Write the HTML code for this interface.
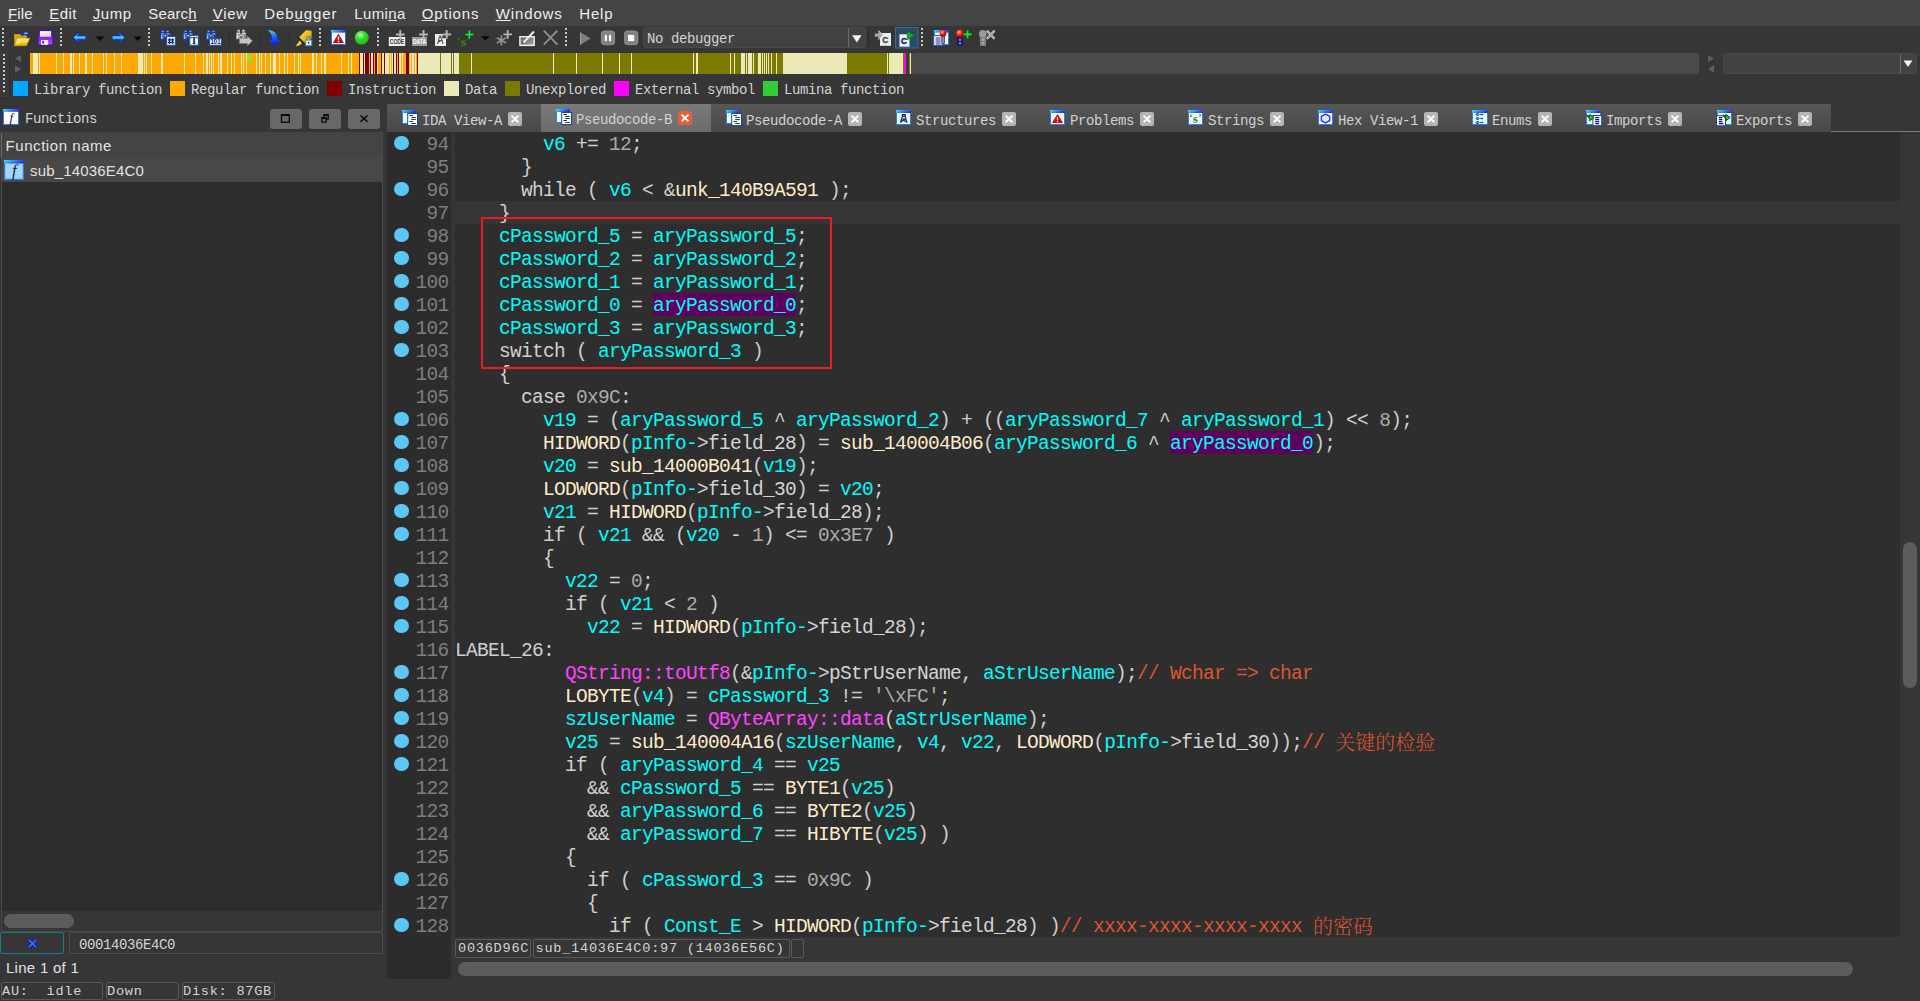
<!DOCTYPE html><html><head><meta charset="utf-8"><title>IDA</title><style>
*{box-sizing:border-box}
html,body{margin:0;padding:0}
body{width:1920px;height:1001px;background:#363636;overflow:hidden;position:relative;font-family:"Liberation Sans",sans-serif;color:#dcdcdc}
.abs{position:absolute}
.ui{font-family:"Liberation Sans",sans-serif;font-size:15px;color:#e2e2e2;white-space:pre;line-height:18px}
.ss{font-family:"Liberation Mono","Noto Sans CJK SC",monospace;font-size:14px;letter-spacing:-0.4px;color:#d2d2d2;white-space:pre;line-height:16px}
.cn{font-family:"Liberation Mono",monospace;font-size:13.6px;letter-spacing:0.74px;color:#d4d4d4;white-space:pre;line-height:18px}
#menubar{left:0;top:0;width:1920px;height:26px;background:#444444}
#menubar span.mi{position:absolute;top:3.7px;font-size:15px;line-height:19px;color:#eeeeee;white-space:pre}
#menubar u{text-decoration:underline;text-underline-offset:1.2px;text-decoration-thickness:1px}
.grip{position:absolute;width:2px;background-image:repeating-linear-gradient(to bottom,#c8c8c8 0,#c8c8c8 2px,transparent 2px,transparent 4px)}
.code{font-family:"Liberation Mono","Noto Serif CJK SC",monospace;font-size:19.5px;letter-spacing:-0.7px;line-height:23px;white-space:pre;color:#cfcfcf}
.ln{position:absolute;left:387px;width:61.4px;text-align:right;color:#7e7e7e;height:23px}
.cl{position:absolute;left:454.9px;height:23px}
.dot{position:absolute;left:394.2px;width:14.6px;height:14.6px;border-radius:50%;background:#5cc6f4}
.v{color:#00fbfb}.f{color:#ffebc8}.n{color:#ababab}.m{color:#ff44ff}.c{color:#dc5530}.w{color:#d4d4d4}
.cj{font-family:"Noto Serif CJK SC",serif;font-size:20px;letter-spacing:0;font-weight:300;line-height:0;position:relative;top:1.3px}
.hl{background:#5c005c}
.tab{position:absolute;top:104px;height:28px;background:linear-gradient(#575757,#484848)}
.tab.act{background:linear-gradient(#7a7a7a,#6c6c6c)}
.tab .tx{position:absolute;top:8.6px;left:35px}
.tab .ic{position:absolute;top:6px;left:15px;width:17px;height:16px}
.cb{position:absolute;top:8px;width:14px;height:14px;border-radius:2px;background:#b4b4b4}
.tab.act .cb{background:#e2603a;top:7px}
.tab.act .ic{top:5px}
.tab.act .tx{top:7.6px}
.sbx{position:absolute;border:1px solid #5a5a5a;border-radius:2px}
</style></head><body>
<div id="menubar" class="abs">
<span class="mi" style="left:8.0px;letter-spacing:0.13px"><u>F</u>ile</span>
<span class="mi" style="left:49.3px;letter-spacing:0.39px"><u>E</u>dit</span>
<span class="mi" style="left:92.7px;letter-spacing:0.58px"><u>J</u>ump</span>
<span class="mi" style="left:148.3px;letter-spacing:0.15px">Searc<u>h</u></span>
<span class="mi" style="left:212.7px;letter-spacing:0.69px"><u>V</u>iew</span>
<span class="mi" style="left:264.3px;letter-spacing:0.89px">Deb<u>u</u>gger</span>
<span class="mi" style="left:354.3px;letter-spacing:0.37px">Lumi<u>n</u>a</span>
<span class="mi" style="left:421.7px;letter-spacing:0.84px"><u>O</u>ptions</span>
<span class="mi" style="left:495.7px;letter-spacing:0.88px"><u>W</u>indows</span>
<span class="mi" style="left:579.3px;letter-spacing:0.79px">Help</span>
</div>
<div class="grip" style="left:2px;top:28px;height:18px"></div>
<div class="grip" style="left:60px;top:28px;height:18px"></div>
<div class="grip" style="left:148px;top:28px;height:18px"></div>
<div class="grip" style="left:319px;top:28px;height:18px"></div>
<div class="grip" style="left:377px;top:28px;height:18px"></div>
<div class="grip" style="left:565px;top:28px;height:18px"></div>
<div class="grip" style="left:921px;top:28px;height:18px"></div>
<svg class="abs" style="left:0;top:26px" width="1920" height="26" viewBox="0 0 1920 26">
<defs>
<linearGradient id="gy" x1="0" y1="0" x2="0.3" y2="1"><stop offset="0" stop-color="#fff6a0"/><stop offset="0.6" stop-color="#ffe040"/><stop offset="1" stop-color="#e0a010"/></linearGradient>
<linearGradient id="gb" x1="0" y1="0" x2="0" y2="1"><stop offset="0" stop-color="#0020f0"/><stop offset="0.45" stop-color="#50d8ff"/><stop offset="1" stop-color="#0020e0"/></linearGradient>
<linearGradient id="gb2" x1="0" y1="0" x2="0" y2="1"><stop offset="0" stop-color="#48e0ff"/><stop offset="0.4" stop-color="#2868ff"/><stop offset="1" stop-color="#0010f0"/></linearGradient>
<radialGradient id="gg" cx="0.4" cy="0.32" r="0.75"><stop offset="0" stop-color="#b8ffa0"/><stop offset="0.45" stop-color="#30d828"/><stop offset="0.85" stop-color="#20c018"/><stop offset="1" stop-color="#0a6808"/></radialGradient>
<radialGradient id="gr" cx="0.38" cy="0.32" r="0.75"><stop offset="0" stop-color="#ffb0a0"/><stop offset="0.5" stop-color="#f01808"/><stop offset="1" stop-color="#980000"/></radialGradient>
<linearGradient id="gw" x1="0" y1="0" x2="1" y2="1"><stop offset="0" stop-color="#ffffff"/><stop offset="1" stop-color="#ecc8c8"/></linearGradient>
<linearGradient id="gp" x1="0" y1="0" x2="0" y2="1"><stop offset="0" stop-color="#5810c8"/><stop offset="0.5" stop-color="#8028f0"/><stop offset="1" stop-color="#a848ff"/></linearGradient>
<linearGradient id="ggr" x1="0" y1="0" x2="1" y2="1"><stop offset="0" stop-color="#606060"/><stop offset="1" stop-color="#a8a8a8"/></linearGradient>
<linearGradient id="gtb" x1="0" y1="0" x2="1" y2="0.4"><stop offset="0" stop-color="#50e0ff"/><stop offset="0.6" stop-color="#2a7cf0"/><stop offset="1" stop-color="#3030e0"/></linearGradient>
<linearGradient id="ghl" x1="0" y1="0" x2="1" y2="1"><stop offset="0" stop-color="#ffe860"/><stop offset="0.6" stop-color="#e8b800"/><stop offset="1" stop-color="#806800"/></linearGradient>
</defs>
<g transform="translate(14,4)"><path d="M0.3 4.2 h5.6 l1.2 1.4 h5.6 v2.6 h-12.4z" fill="#e8b828"/><path d="M0.3 5.5 h12.4 v10.3 h-12.4z" fill="#d8a010"/><path d="M3.2 8.2 h12.6 l-3.2 7.6 h-12.2z" fill="url(#gy)" stroke="#c89010" stroke-width="0.5"/><path d="M7.4 6 q0.4 -3.6 4.4 -3.8 v-2 l3.2 3.2 l-3.2 3.2 v-2 q-2.4 -0.2 -3 1.6z" fill="#1838e8"/><path d="M10.2 3.2 h3.4" stroke="#70f0ff" stroke-width="1.1"/></g>
<g transform="translate(38,4)"><rect x="0.2" y="0.2" width="14.6" height="14.6" rx="0.6" fill="url(#gp)"/><rect x="0.2" y="0.2" width="14.6" height="14.6" rx="0.6" fill="none" stroke="#4808a8" stroke-width="0.7"/><rect x="2" y="1.1" width="11" height="5.7" fill="url(#gw)"/><rect x="3" y="10" width="7.2" height="4.8" fill="#f4ecff"/><rect x="4.3" y="10.8" width="1.6" height="2.8" fill="#5810b0"/></g>
<g transform="translate(73,4)"><path d="M0.3 7.5 L5.8 2.2 L6.8 3.2 L4 6 H12.8 V9.4 H4 L6.8 11.8 L5.8 12.8Z" fill="url(#gb)" stroke="#0020f0" stroke-width="0.5"/></g>
<path d="M95.4 10.4 h9 l-4.5 4.6z" fill="#0a0a0a"/>
<g transform="translate(112,4)"><path d="M12.7 7.5 L7.2 2.2 L6.2 3.2 L9 6 H0.2 V9.4 H9 L6.2 11.8 L7.2 12.8Z" fill="url(#gb)" stroke="#0020f0" stroke-width="0.5"/></g>
<path d="M133.2 10.4 h9 l-4.5 4.6z" fill="#0a0a0a"/>
<g transform="translate(160.2,4)"><rect x="1.2" y="0" width="2.8" height="3.4" fill="#1a3cb0"/><rect x="6" y="0" width="2.8" height="3.4" fill="#1a3cb0"/><rect x="0" y="3" width="4.7" height="6.8" rx="0.6" fill="#1a3cb0"/><rect x="5.5" y="3" width="4.7" height="6.8" rx="0.6" fill="#1a3cb0"/><rect x="1.6" y="0.8" width="2" height="1" fill="#8cc8ff"/><rect x="6.4" y="0.8" width="2" height="1" fill="#8cc8ff"/><rect x="0.8" y="3.4" width="3.2" height="1.1" fill="#8cc8ff"/><rect x="6.2" y="3.4" width="3.2" height="1.1" fill="#8cc8ff"/><rect x="0.8" y="5.2" width="1.6" height="3.8" fill="#8cc8ff"/><rect x="6.4" y="5.2" width="1.4" height="3.4" fill="#3a70e0"/><rect x="2.4" y="5.4" width="1.4" height="3.4" fill="#3a70e0"/><rect x="4.4" y="5" width="1.4" height="1.4" fill="#ffffff"/><rect x="6.3" y="6.5" width="9" height="8.8" fill="#ffffff" stroke="#1c58a8" stroke-width="1.2"/><path d="M9.3 8.2 V14 M12.3 8.2 V14 M7.6 9.8 H14 M7.6 12.4 H14" stroke="#0a2060" stroke-width="1.3"/></g>
<g transform="translate(183,4)"><rect x="1.2" y="0" width="2.8" height="3.4" fill="#1a3cb0"/><rect x="6" y="0" width="2.8" height="3.4" fill="#1a3cb0"/><rect x="0" y="3" width="4.7" height="6.8" rx="0.6" fill="#1a3cb0"/><rect x="5.5" y="3" width="4.7" height="6.8" rx="0.6" fill="#1a3cb0"/><rect x="1.6" y="0.8" width="2" height="1" fill="#8cc8ff"/><rect x="6.4" y="0.8" width="2" height="1" fill="#8cc8ff"/><rect x="0.8" y="3.4" width="3.2" height="1.1" fill="#8cc8ff"/><rect x="6.2" y="3.4" width="3.2" height="1.1" fill="#8cc8ff"/><rect x="0.8" y="5.2" width="1.6" height="3.8" fill="#8cc8ff"/><rect x="6.4" y="5.2" width="1.4" height="3.4" fill="#3a70e0"/><rect x="2.4" y="5.4" width="1.4" height="3.4" fill="#3a70e0"/><rect x="4.4" y="5" width="1.4" height="1.4" fill="#ffffff"/><rect x="6.7" y="5.5" width="8.8" height="9.8" fill="#ffffff" stroke="#1c58a8" stroke-width="1.2"/><text x="11.1" y="14.4" font-family="Liberation Serif,serif" font-weight="bold" font-size="10.5" text-anchor="middle" fill="#0a1a58">T</text></g>
<g transform="translate(206,4)"><rect x="1.2" y="0" width="2.8" height="3.4" fill="#1a3cb0"/><rect x="6" y="0" width="2.8" height="3.4" fill="#1a3cb0"/><rect x="0" y="3" width="4.7" height="6.8" rx="0.6" fill="#1a3cb0"/><rect x="5.5" y="3" width="4.7" height="6.8" rx="0.6" fill="#1a3cb0"/><rect x="1.6" y="0.8" width="2" height="1" fill="#8cc8ff"/><rect x="6.4" y="0.8" width="2" height="1" fill="#8cc8ff"/><rect x="0.8" y="3.4" width="3.2" height="1.1" fill="#8cc8ff"/><rect x="6.2" y="3.4" width="3.2" height="1.1" fill="#8cc8ff"/><rect x="0.8" y="5.2" width="1.6" height="3.8" fill="#8cc8ff"/><rect x="6.4" y="5.2" width="1.4" height="3.4" fill="#3a70e0"/><rect x="2.4" y="5.4" width="1.4" height="3.4" fill="#3a70e0"/><rect x="4.4" y="5" width="1.4" height="1.4" fill="#ffffff"/><rect x="3.5" y="8.5" width="12" height="6.8" fill="#ffffff" stroke="#1c58a8" stroke-width="1.2"/><text x="9.5" y="14.4" font-family="Liberation Sans,sans-serif" font-weight="bold" font-size="6.4" text-anchor="middle" fill="#0a1a58" textLength="10" lengthAdjust="spacingAndGlyphs">101</text></g>
<rect x="229" y="4" width="1" height="16" fill="#2c2c2c"/>
<g transform="translate(236,3.5)"><rect x="1.2" y="0" width="2.8" height="3.4" fill="#8c8c8c"/><rect x="6" y="0" width="2.8" height="3.4" fill="#8c8c8c"/><rect x="0" y="3" width="4.7" height="6.8" rx="0.6" fill="#8c8c8c"/><rect x="5.5" y="3" width="4.7" height="6.8" rx="0.6" fill="#8c8c8c"/><rect x="1.6" y="0.8" width="2" height="1" fill="#e0e0e0"/><rect x="6.4" y="0.8" width="2" height="1" fill="#e0e0e0"/><rect x="0.8" y="3.4" width="3.2" height="1.1" fill="#e0e0e0"/><rect x="6.2" y="3.4" width="3.2" height="1.1" fill="#e0e0e0"/><rect x="0.8" y="5.2" width="1.6" height="3.8" fill="#e0e0e0"/><rect x="6.4" y="5.2" width="1.4" height="3.4" fill="#b8b8b8"/><rect x="2.4" y="5.4" width="1.4" height="3.4" fill="#b8b8b8"/><rect x="4.4" y="5" width="1.4" height="1.4" fill="#ffffff"/><path d="M3.4 8.8 h8 v-2.2 l5 4.8 l-5 4.8 v-2.2 h-8z" fill="#c4c4c4" stroke="#7c7c7c" stroke-width="0.7"/></g>
<rect x="259" y="4" width="1" height="16" fill="#2c2c2c"/>
<g transform="translate(267,4)"><path d="M0.8 0 Q10.5 0.2 10.2 9.8 H13.2 L7.4 16 L1.6 9.8 H4.8 Q5.4 3.4 0.8 0Z" fill="url(#gb2)"/></g>
<rect x="289" y="4" width="1" height="16" fill="#2c2c2c"/>
<g transform="translate(296,4)"><path d="M3 7.2 L10 0.2 L15.6 0.8 L15.6 9 L8.6 13Z" fill="url(#ghl)"/><path d="M3 7.2 L8.6 13 L7.2 14 L2.4 8.4Z" fill="#0c2818"/><path d="M3.6 10.6 L6 13.2 L3.4 15.6 Q1 16.4 0 15.4Z" fill="#ffc800"/><path d="M0 15.4 Q2 16.4 4 15 L3 15.9Z" fill="#e06000"/><rect x="9.4" y="10" width="6.4" height="5.8" rx="0.6" fill="#dce6f0" stroke="#3c78b8" stroke-width="0.9"/><path d="M10.8 10 v-1.6 a1.8 1.8 0 0 1 3.6 0 v1.6" fill="none" stroke="#5088c0" stroke-width="1.1"/><rect x="12.1" y="12" width="1" height="1.8" fill="#103060"/><rect x="12" y="8.2" width="1.2" height="1.6" fill="#f0a020"/></g>
<g transform="translate(331,4)"><rect x="0.5" y="0.5" width="14" height="14" fill="#f0fcff" stroke="#2a6cf0" stroke-width="1"/><rect x="0" y="0" width="15" height="2.6" fill="url(#gtb)"/><path d="M7.4 3.6 L13 13 H1.8Z" fill="#d80808"/><rect x="6.8" y="6.4" width="1.3" height="3.6" fill="#fff"/><rect x="6.8" y="10.8" width="1.3" height="1.3" fill="#fff"/></g>
<circle cx="361.75" cy="11.7" r="7" fill="url(#gg)"/>
<g transform="translate(388.8,4)"><rect x="0" y="7" width="16.4" height="9" fill="#f0f0f0"/><text x="8.2" y="14.4" font-family="Liberation Sans,sans-serif" font-weight="bold" font-size="7" text-anchor="middle" fill="#303030" textLength="14.4" lengthAdjust="spacingAndGlyphs">CODE</text><path d="M7.1 4.4 H15.9 M11.5 0.0 V8.8" stroke="#b2b2b2" stroke-width="2" fill="none"/></g>
<g transform="translate(412,4)"><rect x="0" y="7" width="15" height="9" fill="#9c9c9c"/><text x="7.5" y="14.4" font-family="Liberation Sans,sans-serif" font-weight="bold" font-size="7" text-anchor="middle" fill="#ffffff" textLength="13" lengthAdjust="spacingAndGlyphs">DATA</text><path d="M7.1 4.4 H15.9 M11.5 0.0 V8.8" stroke="#b2b2b2" stroke-width="2" fill="none"/></g>
<g transform="translate(435,4)"><path d="M0 4 H7.4 V8.2 H11 V16 H0Z" fill="#ececec"/><path d="M4 6 h2.4 M5.2 6 v1 M4.2 7.4 h2 L8 14 M4.2 7.4 L2.6 14 M3.4 10.4 h3.8 M3 12.4 l4 -2.4" stroke="#484848" stroke-width="1" fill="none"/><path d="M7.299999999999999 4.4 H16.1 M11.7 0.0 V8.8" stroke="#b2b2b2" stroke-width="2" fill="none"/></g>
<g transform="translate(457.5,4)"><text x="6" y="15.6" font-family="Liberation Serif,serif" font-weight="bold" font-size="13.5" text-anchor="middle" fill="#3a8c08">s</text><text x="1.2" y="13" font-family="Liberation Serif,serif" font-weight="bold" font-size="9" text-anchor="middle" fill="#3a8c08">‘</text><text x="10.6" y="13" font-family="Liberation Serif,serif" font-weight="bold" font-size="9" text-anchor="middle" fill="#3a8c08">’</text><path d="M7.5 4.4 H16.3 M11.9 0.0 V8.8" stroke="#0a5a10" stroke-width="3" fill="none"/><path d="M7.9 4.4 H15.9 M11.9 0.40000000000000036 V8.4" stroke="#28e848" stroke-width="1.5" fill="none"/></g>
<path d="M480.9 10.2 h9 l-4.5 4.6z" fill="#0a0a0a"/>
<g transform="translate(496,4)"><path d="M5.4 5.2 V15.6 M0.8 7.8 L10 13 M10 7.8 L0.8 13" stroke="#909090" stroke-width="1.7" fill="none"/><path d="M7.3999999999999995 4.4 H16.0 M11.7 0.10000000000000053 V8.7" stroke="#b2b2b2" stroke-width="1.9" fill="none"/></g>
<g transform="translate(519.2,4)"><rect x="0.7" y="6.7" width="14.3" height="8.7" fill="url(#ggr)" stroke="#f0f0f0" stroke-width="1.4"/><path d="M3.4 12.2 L14 0.8 L15.4 2.2 L4.8 13.2Z" fill="#f4f4f4"/><rect x="2.6" y="12.2" width="1.4" height="1.2" fill="#303030"/></g>
<g transform="translate(543,4)"><path d="M0.8 0.6 L14.4 14.6 M14.4 0.6 L0.8 14.6" stroke="#8e8e8e" stroke-width="1.9" fill="none"/></g>
<path d="M580 6.1 V19 L590.8 12.6Z" fill="#7e7e7e"/><path d="M580.5 6.6 V18.4" stroke="#a0a0a0" stroke-width="1"/>
<rect x="601.4" y="5" width="13.2" height="13.7" rx="2.6" fill="#828282" stroke="#999" stroke-width="0.8"/><rect x="604.8" y="8.9" width="2.1" height="6.2" fill="#fbfbfb"/><rect x="609" y="8.9" width="2.1" height="6.2" fill="#fbfbfb"/>
<rect x="624.6" y="5" width="13.2" height="13.7" rx="2.6" fill="#828282" stroke="#999" stroke-width="0.8"/><rect x="628" y="8.9" width="6.2" height="6.2" fill="#fbfbfb"/>
<rect x="643.5" y="1.5" width="222" height="20" rx="2.5" fill="#424242" stroke="#494949" stroke-width="1"/>
<rect x="848" y="2" width="1" height="19" fill="#6c6c6c"/>
<path d="M852 9.3 h9.6 l-4.8 7.2z" fill="#f6f6f6"/>
<rect x="868" y="4" width="1" height="16" fill="#2c2c2c"/>
<g transform="translate(874.8,4)"><rect x="5.2" y="3" width="11" height="12.8" fill="#ebebeb"/><text x="10.4" y="12.6" font-family="Liberation Sans,sans-serif" font-weight="bold" font-size="8.4" text-anchor="middle" fill="#484848" stroke="#484848" stroke-width="0.4">C</text><path d="M0 3.4 h3.6 v-3.2 l4.6 4.9 l-4.6 4.9 v-3.2 h-3.6z" fill="#a4a4a4"/><path d="M3.8 0.6 l4.4 4.5 l-4.4 4.5" fill="none" stroke="#d8d8d8" stroke-width="0.8"/></g>
<rect x="895.5" y="1.5" width="22.5" height="20.5" fill="#2c4a64" stroke="#3c6a98" stroke-width="1"/>
<g transform="translate(899.4,4)"><rect x="0.4" y="4.4" width="9.4" height="12" fill="#f0f8ff" stroke="#a8c8f0" stroke-width="0.8"/><text x="4.6" y="13.9" font-family="Liberation Sans,sans-serif" font-weight="bold" font-size="8.4" text-anchor="middle" fill="#10107a" stroke="#10107a" stroke-width="0.4">C</text><path d="M7.8 1.2 V9.8 L15.2 5.5Z" fill="#18a828" stroke="#0a6a18" stroke-width="0.5"/></g>
<g transform="translate(933.2,4)"><rect x="1.2" y="0.5" width="14.2" height="14" fill="#f4fbff" stroke="#2a7cf0" stroke-width="1"/><rect x="0.7" y="0" width="15.2" height="2.6" fill="url(#gtb)"/><rect x="0.5" y="5.6" width="8.6" height="10" fill="#ffffff" stroke="#1c58a8" stroke-width="1"/><path d="M2.4 8 h5 M2.4 10 h5 M2.4 12 h5 M2.4 14 h5" stroke="#1020a0" stroke-width="1.1"/><rect x="8.6" y="6" width="2.8" height="7.4" fill="#909088" stroke="#202878" stroke-width="0.7"/><circle cx="9.8" cy="3.4" r="3.3" fill="url(#gr)"/></g>
<g transform="translate(956,4)"><rect x="1" y="6.5" width="6" height="9.5" fill="#101878"/><circle cx="4" cy="9.8" r="1.2" fill="#8c8c8c"/><circle cx="4" cy="13.2" r="1.2" fill="#8c8c8c"/><circle cx="3.9" cy="3.7" r="3.9" fill="url(#gr)"/><path d="M7.3999999999999995 4.4 H15.8 M11.6 0.20000000000000018 V8.600000000000001" stroke="#0a5a10" stroke-width="3" fill="none"/><path d="M7.699999999999999 4.4 H15.5 M11.6 0.5000000000000004 V8.3" stroke="#28e040" stroke-width="1.6" fill="none"/></g>
<g transform="translate(979,4)"><rect x="1" y="6.5" width="6" height="9.5" fill="#808080"/><circle cx="4" cy="9.8" r="1.2" fill="#a8a8a8"/><circle cx="4" cy="13.2" r="1.2" fill="#a8a8a8"/><circle cx="3.8" cy="3.7" r="3.8" fill="#9a9a9a"/><path d="M7.8 0.6 L15.6 8.8 M15.6 0.6 L7.8 8.8" stroke="#c4c4c4" stroke-width="2.4"/><path d="M7.8 0.6 L15.6 8.8 M15.6 0.6 L7.8 8.8" stroke="#8a8a8a" stroke-width="0.7"/></g>
</svg>
<div class="abs ss" style="left:647px;top:30.7px">No debugger</div>
<div class="abs" style="left:0;top:50px;width:10px;height:49px;background:#3a3a3a;border-right:1px solid #2c2c2c;border-bottom:1px solid #2c2c2c"></div>
<div class="grip" style="left:3px;top:54px;height:38px"></div>
<svg class="abs" style="left:12px;top:53px" width="12" height="22" viewBox="0 0 12 22"><path d="M9 2 L9 9 L3 5.5Z M3 12 L3 20 L9 16Z" fill="#5e5e5e"/></svg>
<svg class="abs" style="left:0;top:53px" width="1920" height="21" viewBox="0 0 1920 21" shape-rendering="crispEdges">
<rect x="911" y="0" width="788" height="21" fill="#4a4a4a"/>
<rect x="30" y="0" width="329" height="21" fill="#ffa800"/>
<rect x="33" y="0" width="5" height="21" fill="#ece9b8"/>
<rect x="39" y="0" width="1" height="21" fill="#ece9b8"/>
<rect x="56" y="0" width="1" height="21" fill="#ece9b8"/>
<rect x="63" y="0" width="1" height="21" fill="#ece9b8"/>
<rect x="70" y="0" width="2" height="21" fill="#ece9b8"/>
<rect x="73" y="0" width="1" height="21" fill="#ece9b8"/>
<rect x="79" y="0" width="1" height="21" fill="#ece9b8"/>
<rect x="85" y="0" width="2" height="21" fill="#ece9b8"/>
<rect x="92" y="0" width="1" height="21" fill="#ece9b8"/>
<rect x="103" y="0" width="1" height="21" fill="#ece9b8"/>
<rect x="106" y="0" width="1" height="21" fill="#ece9b8"/>
<rect x="114" y="0" width="1" height="21" fill="#ece9b8"/>
<rect x="121" y="0" width="1" height="21" fill="#ece9b8"/>
<rect x="138" y="0" width="5" height="21" fill="#ece9b8"/>
<rect x="144" y="0" width="1" height="21" fill="#ece9b8"/>
<rect x="146" y="0" width="1" height="21" fill="#ece9b8"/>
<rect x="151" y="0" width="1" height="21" fill="#ece9b8"/>
<rect x="161" y="0" width="2" height="21" fill="#ece9b8"/>
<rect x="184" y="0" width="1" height="21" fill="#ece9b8"/>
<rect x="195" y="0" width="1" height="21" fill="#ece9b8"/>
<rect x="203" y="0" width="1" height="21" fill="#ece9b8"/>
<rect x="206" y="0" width="2" height="21" fill="#ece9b8"/>
<rect x="209" y="0" width="1" height="21" fill="#ece9b8"/>
<rect x="211" y="0" width="1" height="21" fill="#ece9b8"/>
<rect x="213" y="0" width="1" height="21" fill="#ece9b8"/>
<rect x="218" y="0" width="1" height="21" fill="#ece9b8"/>
<rect x="220" y="0" width="2" height="21" fill="#ece9b8"/>
<rect x="227" y="0" width="1" height="21" fill="#ece9b8"/>
<rect x="231" y="0" width="1" height="21" fill="#ece9b8"/>
<rect x="234" y="0" width="1" height="21" fill="#ece9b8"/>
<rect x="241" y="0" width="1" height="21" fill="#ece9b8"/>
<rect x="243" y="0" width="1" height="21" fill="#ece9b8"/>
<rect x="246" y="0" width="1" height="21" fill="#ece9b8"/>
<rect x="256" y="0" width="1" height="21" fill="#ece9b8"/>
<rect x="259" y="0" width="1" height="21" fill="#ece9b8"/>
<rect x="261" y="0" width="1" height="21" fill="#ece9b8"/>
<rect x="265" y="0" width="1" height="21" fill="#ece9b8"/>
<rect x="270" y="0" width="1" height="21" fill="#ece9b8"/>
<rect x="273" y="0" width="3" height="21" fill="#ece9b8"/>
<rect x="279" y="0" width="1" height="21" fill="#ece9b8"/>
<rect x="284" y="0" width="1" height="21" fill="#ece9b8"/>
<rect x="287" y="0" width="1" height="21" fill="#ece9b8"/>
<rect x="294" y="0" width="1" height="21" fill="#ece9b8"/>
<rect x="298" y="0" width="1" height="21" fill="#ece9b8"/>
<rect x="300" y="0" width="1" height="21" fill="#ece9b8"/>
<rect x="312" y="0" width="2" height="21" fill="#ece9b8"/>
<rect x="316" y="0" width="1" height="21" fill="#ece9b8"/>
<rect x="321" y="0" width="1" height="21" fill="#ece9b8"/>
<rect x="324" y="0" width="2" height="21" fill="#ece9b8"/>
<rect x="341" y="0" width="1" height="21" fill="#ece9b8"/>
<rect x="348" y="0" width="1" height="21" fill="#ece9b8"/>
<rect x="351" y="0" width="1" height="21" fill="#ece9b8"/>
<rect x="359" y="0" width="59" height="21" fill="#ffa800"/>
<rect x="359" y="0" width="1" height="21" fill="#800000"/>
<rect x="360" y="0" width="3" height="21" fill="#ece9b8"/>
<rect x="363" y="0" width="1" height="21" fill="#800000"/>
<rect x="364" y="0" width="1" height="21" fill="#ece9b8"/>
<rect x="365" y="0" width="4" height="21" fill="#800000"/>
<rect x="370" y="0" width="1" height="21" fill="#800000"/>
<rect x="371" y="0" width="2" height="21" fill="#ece9b8"/>
<rect x="373" y="0" width="1" height="21" fill="#800000"/>
<rect x="375" y="0" width="2" height="21" fill="#800000"/>
<rect x="377" y="0" width="1" height="21" fill="#ece9b8"/>
<rect x="381" y="0" width="1" height="21" fill="#800000"/>
<rect x="382" y="0" width="2" height="21" fill="#ece9b8"/>
<rect x="384" y="0" width="1" height="21" fill="#800000"/>
<rect x="385" y="0" width="4" height="21" fill="#ece9b8"/>
<rect x="390" y="0" width="1" height="21" fill="#ece9b8"/>
<rect x="392" y="0" width="1" height="21" fill="#ece9b8"/>
<rect x="393" y="0" width="1" height="21" fill="#800000"/>
<rect x="394" y="0" width="2" height="21" fill="#ece9b8"/>
<rect x="396" y="0" width="1" height="21" fill="#800000"/>
<rect x="398" y="0" width="1" height="21" fill="#800000"/>
<rect x="399" y="0" width="2" height="21" fill="#ece9b8"/>
<rect x="402" y="0" width="1" height="21" fill="#ece9b8"/>
<rect x="406" y="0" width="3" height="21" fill="#800000"/>
<rect x="410" y="0" width="1" height="21" fill="#ece9b8"/>
<rect x="412" y="0" width="2" height="21" fill="#ece9b8"/>
<rect x="415" y="0" width="1" height="21" fill="#ece9b8"/>
<rect x="417" y="0" width="1" height="21" fill="#800000"/>
<rect x="418" y="0" width="41" height="21" fill="#ece9b8"/>
<rect x="440" y="0" width="1" height="21" fill="#7a7a00"/>
<rect x="451" y="0" width="1" height="21" fill="#7a7a00"/>
<rect x="453" y="0" width="1" height="21" fill="#7a7a00"/>
<rect x="459" y="0" width="452" height="21" fill="#7a7a00"/>
<rect x="471" y="0" width="1" height="21" fill="#ece9b8"/>
<rect x="553" y="0" width="1" height="21" fill="#ece9b8"/>
<rect x="576" y="0" width="1" height="21" fill="#ece9b8"/>
<rect x="602" y="0" width="1" height="21" fill="#ece9b8"/>
<rect x="619" y="0" width="1" height="21" fill="#ece9b8"/>
<rect x="631" y="0" width="1" height="21" fill="#ece9b8"/>
<rect x="693" y="0" width="1" height="21" fill="#ece9b8"/>
<rect x="696" y="0" width="2" height="21" fill="#ece9b8"/>
<rect x="730" y="0" width="1" height="21" fill="#ece9b8"/>
<rect x="734" y="0" width="1" height="21" fill="#ece9b8"/>
<rect x="741" y="0" width="4" height="21" fill="#ece9b8"/>
<rect x="746" y="0" width="1" height="21" fill="#ece9b8"/>
<rect x="748" y="0" width="4" height="21" fill="#ece9b8"/>
<rect x="753" y="0" width="1" height="21" fill="#ece9b8"/>
<rect x="758" y="0" width="3" height="21" fill="#ece9b8"/>
<rect x="762" y="0" width="1" height="21" fill="#ece9b8"/>
<rect x="764" y="0" width="1" height="21" fill="#ece9b8"/>
<rect x="766" y="0" width="1" height="21" fill="#ece9b8"/>
<rect x="768" y="0" width="1" height="21" fill="#ece9b8"/>
<rect x="771" y="0" width="1" height="21" fill="#ece9b8"/>
<rect x="776" y="0" width="1" height="21" fill="#ece9b8"/>
<rect x="783" y="0" width="64" height="21" fill="#ece9b8"/>
<rect x="887" y="0" width="1" height="21" fill="#ece9b8"/>
<rect x="889" y="0" width="14" height="21" fill="#ece9b8"/>
<rect x="910" y="0" width="1" height="21" fill="#ece9b8"/>
<rect x="904" y="0" width="2" height="21" fill="#ff00ff"/>
<rect x="906" y="0" width="3" height="21" fill="#3c3c3c"/>
<path d="M248.4 1 h2.4 v4.6 h1.6 l-2.8 3.6 l-2.8 -3.6 h1.6z" fill="#5cff30" shape-rendering="auto"/>
</svg>
<svg class="abs" style="left:1705px;top:53px" width="12" height="22" viewBox="0 0 12 22"><path d="M3 2 L3 9 L9 5.5Z M9 12 L9 20 L3 16Z" fill="#5e5e5e"/></svg>
<div class="abs" style="left:1723px;top:53px;width:194px;height:21px;background:#424242;border:1px solid #494949;border-radius:2.5px"></div>
<div class="abs" style="left:1900px;top:54px;width:1px;height:19px;background:#6c6c6c"></div>
<svg class="abs" style="left:1903px;top:60px" width="10" height="8"><path d="M0.5 0.5 h9 l-4.5 6.5z" fill="#f0f0f0"/></svg>
<div class="abs" style="left:13px;top:81px;width:15px;height:15px;background:#00a8ff"></div>
<div class="abs ss" style="left:34px;top:81.7px">Library function</div>
<div class="abs" style="left:170px;top:81px;width:15px;height:15px;background:#ffa800"></div>
<div class="abs ss" style="left:191px;top:81.7px">Regular function</div>
<div class="abs" style="left:327px;top:81px;width:15px;height:15px;background:#800000"></div>
<div class="abs ss" style="left:348px;top:81.7px">Instruction</div>
<div class="abs" style="left:444px;top:81px;width:15px;height:15px;background:#ece9b8"></div>
<div class="abs ss" style="left:465px;top:81.7px">Data</div>
<div class="abs" style="left:505px;top:81px;width:15px;height:15px;background:#7a7a00"></div>
<div class="abs ss" style="left:526px;top:81.7px">Unexplored</div>
<div class="abs" style="left:614px;top:81px;width:15px;height:15px;background:#ff00ff"></div>
<div class="abs ss" style="left:635px;top:81.7px">External symbol</div>
<div class="abs" style="left:763px;top:81px;width:15px;height:15px;background:#32cd32"></div>
<div class="abs ss" style="left:784px;top:81.7px">Lumina function</div>
<div class="abs" style="left:3px;top:109px;width:16px;height:16px"><svg width="16" height="16" viewBox="0 0 16 16"><rect x="0.5" y="0.5" width="15" height="15" fill="#ffffff" stroke="#2a7cf0" stroke-width="1"/><rect x="0" y="0" width="16" height="2.8" fill="url(#gtb)"/><text x="8.2" y="13" font-family="Liberation Serif,serif" font-style="italic" font-size="13" text-anchor="middle" fill="#0a1a50">f</text></svg></div>
<div class="abs ss" style="left:25px;top:111.4px">Functions</div>
<div class="abs" style="left:270px;top:109px;width:32px;height:20px;border-radius:3px;background:#686868"></div>
<div class="abs" style="left:309px;top:109px;width:32px;height:20px;border-radius:3px;background:#686868"></div>
<div class="abs" style="left:348px;top:109px;width:32px;height:20px;border-radius:3px;background:#686868"></div>
<svg class="abs" style="left:270px;top:109px" width="112" height="20" viewBox="0 0 112 20"><rect x="11.5" y="6.2" width="7.8" height="7" fill="none" stroke="#080808" stroke-width="1.3"/><rect x="10.85" y="5.2" width="9.1" height="1.8" fill="#080808"/><rect x="53.9" y="6" width="4.3" height="4.2" fill="none" stroke="#080808" stroke-width="1.2"/><rect x="53.3" y="5.3" width="5.5" height="1.5" fill="#080808"/><rect x="51.85" y="9" width="4.3" height="4.1" fill="#686868" stroke="#080808" stroke-width="1.2"/><rect x="51.25" y="8.3" width="5.5" height="1.5" fill="#080808"/><path d="M90.4 6.5 L97.5 12.8 M97.5 6.5 L90.4 12.8" stroke="#080808" stroke-width="1.5"/></svg>
<div class="abs" style="left:1px;top:132px;width:381px;height:779px;background:#2d2d2d"></div>
<div class="abs" style="left:0px;top:132px;width:382px;height:26px;background:#444444"></div>
<div class="abs" style="left:382px;top:132px;width:1.2px;height:800px;background:#4a4a4a"></div>
<div class="abs" style="left:1px;top:133px;width:1px;height:24px;background:#6a6a6a"></div>
<div class="abs" style="left:1px;top:158px;width:381px;height:24px;background:#484848"></div>
<div class="abs ui" style="left:5.6px;top:137px;letter-spacing:0.55px">Function name</div>
<div class="abs" style="left:4px;top:160px;width:20px;height:20px"><svg width="20" height="20" viewBox="0 0 16 16"><rect x="0.5" y="0.5" width="15" height="15" fill="#a8d4f4" stroke="#2a7cf0" stroke-width="1"/><rect x="0" y="0" width="16" height="2.8" fill="url(#gtb)"/><text x="8.2" y="13" font-family="Liberation Serif,serif" font-style="italic" font-size="13" text-anchor="middle" fill="#0a1a50">f</text></svg></div>
<div class="abs ui" style="left:30px;top:161.5px;letter-spacing:0.18px">sub_14036E4C0</div>
<div class="abs" style="left:1px;top:911px;width:381px;height:21px;background:#363636"></div>
<div class="abs" style="left:4px;top:914.3px;width:70px;height:13.4px;border-radius:6.7px;background:#5c5c5c"></div>
<div class="abs" style="left:0px;top:931px;width:383px;height:1px;background:#474747"></div>
<div class="abs" style="left:0.5px;top:182px;width:1px;height:750px;background:#474747"></div>
<div class="tab" style="left:387px;width:154px"><div class="ic"><svg width="17" height="16" viewBox="0 0 17 16" style="overflow:visible"><rect x="0.5" y="0.5" width="13" height="13" fill="#ecfcff" stroke="#2a7cf0" stroke-width="1"/><rect x="0" y="0" width="14" height="3" fill="url(#gtb)"/><rect x="5.7" y="3.5" width="9.8" height="12" fill="#ffffff" stroke="#154a90" stroke-width="1"/><path d="M7.4 5.5 h3.6 M9.2 7.5 h4.6 M9.2 9.5 h4.6 M7.4 11.5 h3.6 M9.2 13.5 h4.6" stroke="#283848" stroke-width="1"/></svg></div><div class="tx ss">IDA View-A</div><div class="cb" style="left:121px"><svg width="14" height="14" viewBox="0 0 14 14"><path d="M4.3 4.3 L9.7 9.7 M9.7 4.3 L4.3 9.7" stroke="#fff" stroke-width="1.9" stroke-linecap="square"/></svg></div></div>
<div class="tab act" style="left:541px;width:170px"><div class="ic"><svg width="17" height="16" viewBox="0 0 17 16" style="overflow:visible"><rect x="0.5" y="0.5" width="13" height="13" fill="#ecfcff" stroke="#2a7cf0" stroke-width="1"/><rect x="0" y="0" width="14" height="3" fill="url(#gtb)"/><rect x="5.7" y="3.5" width="9.8" height="12" fill="#ffffff" stroke="#154a90" stroke-width="1"/><path d="M7.4 5.5 h3.6 M9.2 7.5 h4.6 M9.2 9.5 h4.6 M7.4 11.5 h3.6 M9.2 13.5 h4.6" stroke="#283848" stroke-width="1"/></svg></div><div class="tx ss">Pseudocode-B</div><div class="cb" style="left:137px"><svg width="14" height="14" viewBox="0 0 14 14"><path d="M4.3 4.3 L9.7 9.7 M9.7 4.3 L4.3 9.7" stroke="#fff" stroke-width="1.9" stroke-linecap="square"/></svg></div></div>
<div class="tab" style="left:711px;width:170px"><div class="ic"><svg width="17" height="16" viewBox="0 0 17 16" style="overflow:visible"><rect x="0.5" y="0.5" width="13" height="13" fill="#ecfcff" stroke="#2a7cf0" stroke-width="1"/><rect x="0" y="0" width="14" height="3" fill="url(#gtb)"/><rect x="5.7" y="3.5" width="9.8" height="12" fill="#ffffff" stroke="#154a90" stroke-width="1"/><path d="M7.4 5.5 h3.6 M9.2 7.5 h4.6 M9.2 9.5 h4.6 M7.4 11.5 h3.6 M9.2 13.5 h4.6" stroke="#283848" stroke-width="1"/></svg></div><div class="tx ss">Pseudocode-A</div><div class="cb" style="left:137px"><svg width="14" height="14" viewBox="0 0 14 14"><path d="M4.3 4.3 L9.7 9.7 M9.7 4.3 L4.3 9.7" stroke="#fff" stroke-width="1.9" stroke-linecap="square"/></svg></div></div>
<div class="tab" style="left:881px;width:154px"><div class="ic"><svg width="17" height="16" viewBox="0 0 17 16" style="overflow:visible"><rect x="0.5" y="0.5" width="14" height="14" fill="#ecfcff" stroke="#2a7cf0" stroke-width="1"/><rect x="0" y="0" width="15" height="3" fill="url(#gtb)"/><path d="M6.4 4.6 h2.8 v1.8 h-2.8z M6.4 6.4 L4.4 12.6 M9.2 6.4 L11 12.6 M5.6 9 h4.4 M5 12 L9.6 8.6 M7.4 10.2 L10.6 12" stroke="#0c2c6c" stroke-width="1.2" fill="none"/></svg></div><div class="tx ss">Structures</div><div class="cb" style="left:121px"><svg width="14" height="14" viewBox="0 0 14 14"><path d="M4.3 4.3 L9.7 9.7 M9.7 4.3 L4.3 9.7" stroke="#fff" stroke-width="1.9" stroke-linecap="square"/></svg></div></div>
<div class="tab" style="left:1035px;width:138px"><div class="ic"><svg width="17" height="16" viewBox="0 0 17 16" style="overflow:visible"><rect x="0.5" y="0.5" width="14" height="14" fill="#ecfcff" stroke="#2a7cf0" stroke-width="1"/><rect x="0" y="0" width="15" height="3" fill="url(#gtb)"/><path d="M7.5 4 L13.1 13 H1.9Z" fill="#d80808"/><rect x="6.9" y="7" width="1.2" height="3.2" fill="#fff"/><rect x="6.9" y="11" width="1.2" height="1.2" fill="#fff"/></svg></div><div class="tx ss">Problems</div><div class="cb" style="left:105px"><svg width="14" height="14" viewBox="0 0 14 14"><path d="M4.3 4.3 L9.7 9.7 M9.7 4.3 L4.3 9.7" stroke="#fff" stroke-width="1.9" stroke-linecap="square"/></svg></div></div>
<div class="tab" style="left:1173px;width:130px"><div class="ic"><svg width="17" height="16" viewBox="0 0 17 16" style="overflow:visible"><rect x="0.5" y="0.5" width="14" height="14" fill="#ecfcff" stroke="#2a7cf0" stroke-width="1"/><rect x="0" y="0" width="15" height="3" fill="url(#gtb)"/><text x="7.5" y="13.4" font-family="Liberation Serif,serif" font-weight="bold" font-size="12.5" text-anchor="middle" fill="#2c8a08">s</text><text x="3" y="11.4" font-family="Liberation Serif,serif" font-weight="bold" font-size="10" text-anchor="middle" fill="#2c8a08">‘</text><text x="12" y="11.4" font-family="Liberation Serif,serif" font-weight="bold" font-size="10" text-anchor="middle" fill="#2c8a08">’</text></svg></div><div class="tx ss">Strings</div><div class="cb" style="left:97px"><svg width="14" height="14" viewBox="0 0 14 14"><path d="M4.3 4.3 L9.7 9.7 M9.7 4.3 L4.3 9.7" stroke="#fff" stroke-width="1.9" stroke-linecap="square"/></svg></div></div>
<div class="tab" style="left:1303px;width:154px"><div class="ic"><svg width="17" height="16" viewBox="0 0 17 16" style="overflow:visible"><rect x="0.5" y="0.5" width="14" height="14" fill="#ecfcff" stroke="#2a7cf0" stroke-width="1"/><rect x="0" y="0" width="15" height="3" fill="url(#gtb)"/><path d="M7.5 4.2 L11.7 6.4 V10.6 L7.5 12.8 L3.3 10.6 V6.4Z" fill="#dce8ff" stroke="#2828ff" stroke-width="1.3" stroke-linejoin="round"/></svg></div><div class="tx ss">Hex View-1</div><div class="cb" style="left:121px"><svg width="14" height="14" viewBox="0 0 14 14"><path d="M4.3 4.3 L9.7 9.7 M9.7 4.3 L4.3 9.7" stroke="#fff" stroke-width="1.9" stroke-linecap="square"/></svg></div></div>
<div class="tab" style="left:1457px;width:114px"><div class="ic"><svg width="17" height="16" viewBox="0 0 17 16" style="overflow:visible"><rect x="0.5" y="0.5" width="15" height="14" fill="#ecfcff" stroke="#2a7cf0" stroke-width="1"/><rect x="0" y="0" width="16" height="3" fill="url(#gtb)"/><path d="M5.5 3.0 L7 4.5 L5.5 6.0 L4 4.5Z" fill="#00e8ff" stroke="#0a1a90" stroke-width="1"/><path d="M8.2 4.5 h3" stroke="#0050c0" stroke-width="1.3"/><path d="M5.5 7.0 L7 8.5 L5.5 10.0 L4 8.5Z" fill="#00e8ff" stroke="#0a1a90" stroke-width="1"/><path d="M8.2 8.5 h3" stroke="#0050c0" stroke-width="1.3"/><path d="M5.5 11.0 L7 12.5 L5.5 14.0 L4 12.5Z" fill="#00e8ff" stroke="#0a1a90" stroke-width="1"/><path d="M8.2 12.5 h3" stroke="#0050c0" stroke-width="1.3"/></svg></div><div class="tx ss">Enums</div><div class="cb" style="left:81px"><svg width="14" height="14" viewBox="0 0 14 14"><path d="M4.3 4.3 L9.7 9.7 M9.7 4.3 L4.3 9.7" stroke="#fff" stroke-width="1.9" stroke-linecap="square"/></svg></div></div>
<div class="tab" style="left:1571px;width:130px"><div class="ic"><svg width="17" height="16" viewBox="0 0 17 16" style="overflow:visible"><rect x="0.5" y="0.5" width="14" height="14" fill="#ecfcff" stroke="#2a7cf0" stroke-width="1"/><rect x="0" y="0" width="15" height="3" fill="url(#gtb)"/><rect x="6.9" y="5.5" width="8.8" height="10.2" fill="#ffffff" stroke="#154a90" stroke-width="1"/><path d="M9.2 7.6 h4 M9.2 9.6 h4 M9.2 11.6 h4 M9.2 13.6 h4" stroke="#0808a0" stroke-width="1.1"/><path d="M0.7999999999999998 5.0 L4 6.699999999999999 L3.6 4.3999999999999995 L8 7.6 L3.6 10.8 L4 8.5 Q2 8.2 0.7999999999999998 5.0Z" fill="#28d028" stroke="#064a10" stroke-width="1"/></svg></div><div class="tx ss">Imports</div><div class="cb" style="left:97px"><svg width="14" height="14" viewBox="0 0 14 14"><path d="M4.3 4.3 L9.7 9.7 M9.7 4.3 L4.3 9.7" stroke="#fff" stroke-width="1.9" stroke-linecap="square"/></svg></div></div>
<div class="tab" style="left:1701px;width:130px"><div class="ic"><svg width="17" height="16" viewBox="0 0 17 16" style="overflow:visible"><rect x="1.5" y="0.5" width="14" height="14" fill="#ecfcff" stroke="#2a7cf0" stroke-width="1"/><rect x="1" y="0" width="15" height="3" fill="url(#gtb)"/><rect x="0.5" y="5.8" width="9" height="10" fill="#ffffff" stroke="#154a90" stroke-width="1"/><path d="M3 7.6 h3.4 M3 9.6 h3.4 M3 11.6 h3.4 M3 13.6 h4.4" stroke="#0808a0" stroke-width="1.1"/><path d="M6.999999999999999 5.0 L10.2 6.699999999999999 L9.799999999999999 4.3999999999999995 L14.2 7.6 L9.799999999999999 10.8 L10.2 8.5 Q8.2 8.2 6.999999999999999 5.0Z" fill="#28d028" stroke="#064a10" stroke-width="1"/></svg></div><div class="tx ss">Exports</div><div class="cb" style="left:97px"><svg width="14" height="14" viewBox="0 0 14 14"><path d="M4.3 4.3 L9.7 9.7 M9.7 4.3 L4.3 9.7" stroke="#fff" stroke-width="1.9" stroke-linecap="square"/></svg></div></div>
<div class="abs" style="left:1831px;top:131px;width:89px;height:1px;background:#7c7c7c"></div>
<div class="abs" style="left:387px;top:132px;width:64px;height:847px;background:#2c2c2c"></div>
<div class="abs" style="left:455px;top:132px;width:1445px;height:805px;background:#2e2e2e"></div>
<div class="abs" style="left:455px;top:201px;width:1445px;height:23px;background:#353535"></div>
<div class="abs" style="left:652.8px;top:293px;width:143px;height:23px;background:#5e005e"></div>
<div class="abs" style="left:1169.8px;top:431px;width:143px;height:23px;background:#5e005e"></div>
<div class="dot" style="top:135.9px"></div>
<div class="ln code" style="top:134.3px">94</div>
<div class="cl code" style="top:134.3px">        <span class="v">v6</span> += <span class="n">12</span>;</div>
<div class="ln code" style="top:157.3px">95</div>
<div class="cl code" style="top:157.3px">      }</div>
<div class="dot" style="top:181.9px"></div>
<div class="ln code" style="top:180.3px">96</div>
<div class="cl code" style="top:180.3px">      while ( <span class="v">v6</span> &lt; &amp;<span class="f">unk_140B9A591</span> );</div>
<div class="ln code" style="top:203.3px">97</div>
<div class="cl code" style="top:203.3px">    }</div>
<div class="dot" style="top:227.9px"></div>
<div class="ln code" style="top:226.3px">98</div>
<div class="cl code" style="top:226.3px">    <span class="v">cPassword_5</span> = <span class="v">aryPassword_5</span>;</div>
<div class="dot" style="top:250.9px"></div>
<div class="ln code" style="top:249.3px">99</div>
<div class="cl code" style="top:249.3px">    <span class="v">cPassword_2</span> = <span class="v">aryPassword_2</span>;</div>
<div class="dot" style="top:273.9px"></div>
<div class="ln code" style="top:272.3px">100</div>
<div class="cl code" style="top:272.3px">    <span class="v">cPassword_1</span> = <span class="v">aryPassword_1</span>;</div>
<div class="dot" style="top:296.9px"></div>
<div class="ln code" style="top:295.3px">101</div>
<div class="cl code" style="top:295.3px">    <span class="v">cPassword_0</span> = <span class="v">aryPassword_0</span>;</div>
<div class="dot" style="top:319.9px"></div>
<div class="ln code" style="top:318.3px">102</div>
<div class="cl code" style="top:318.3px">    <span class="v">cPassword_3</span> = <span class="v">aryPassword_3</span>;</div>
<div class="dot" style="top:342.9px"></div>
<div class="ln code" style="top:341.3px">103</div>
<div class="cl code" style="top:341.3px">    switch ( <span class="v">aryPassword_3</span> )</div>
<div class="ln code" style="top:364.3px">104</div>
<div class="cl code" style="top:364.3px">    {</div>
<div class="ln code" style="top:387.3px">105</div>
<div class="cl code" style="top:387.3px">      case <span class="n">0x9C</span>:</div>
<div class="dot" style="top:411.9px"></div>
<div class="ln code" style="top:410.3px">106</div>
<div class="cl code" style="top:410.3px">        <span class="v">v19</span> = (<span class="v">aryPassword_5</span> ^ <span class="v">aryPassword_2</span>) + ((<span class="v">aryPassword_7</span> ^ <span class="v">aryPassword_1</span>) &lt;&lt; <span class="n">8</span>);</div>
<div class="dot" style="top:434.9px"></div>
<div class="ln code" style="top:433.3px">107</div>
<div class="cl code" style="top:433.3px">        <span class="f">HIDWORD</span>(<span class="v">pInfo-</span>&gt;<span class="w">field_28</span>) = <span class="f">sub_140004B06</span>(<span class="v">aryPassword_6</span> ^ <span class="v">aryPassword_0</span>);</div>
<div class="dot" style="top:457.9px"></div>
<div class="ln code" style="top:456.3px">108</div>
<div class="cl code" style="top:456.3px">        <span class="v">v20</span> = <span class="f">sub_14000B041</span>(<span class="v">v19</span>);</div>
<div class="dot" style="top:480.9px"></div>
<div class="ln code" style="top:479.3px">109</div>
<div class="cl code" style="top:479.3px">        <span class="f">LODWORD</span>(<span class="v">pInfo-</span>&gt;<span class="w">field_30</span>) = <span class="v">v20</span>;</div>
<div class="dot" style="top:503.9px"></div>
<div class="ln code" style="top:502.3px">110</div>
<div class="cl code" style="top:502.3px">        <span class="v">v21</span> = <span class="f">HIDWORD</span>(<span class="v">pInfo-</span>&gt;<span class="w">field_28</span>);</div>
<div class="dot" style="top:526.9px"></div>
<div class="ln code" style="top:525.3px">111</div>
<div class="cl code" style="top:525.3px">        if ( <span class="v">v21</span> &amp;&amp; (<span class="v">v20</span> - <span class="n">1</span>) &lt;= <span class="n">0x3E7</span> )</div>
<div class="ln code" style="top:548.3px">112</div>
<div class="cl code" style="top:548.3px">        {</div>
<div class="dot" style="top:572.9px"></div>
<div class="ln code" style="top:571.3px">113</div>
<div class="cl code" style="top:571.3px">          <span class="v">v22</span> = <span class="n">0</span>;</div>
<div class="dot" style="top:595.9px"></div>
<div class="ln code" style="top:594.3px">114</div>
<div class="cl code" style="top:594.3px">          if ( <span class="v">v21</span> &lt; <span class="n">2</span> )</div>
<div class="dot" style="top:618.9px"></div>
<div class="ln code" style="top:617.3px">115</div>
<div class="cl code" style="top:617.3px">            <span class="v">v22</span> = <span class="f">HIDWORD</span>(<span class="v">pInfo-</span>&gt;<span class="w">field_28</span>);</div>
<div class="ln code" style="top:640.3px">116</div>
<div class="cl code" style="top:640.3px">LABEL_26:</div>
<div class="dot" style="top:664.9px"></div>
<div class="ln code" style="top:663.3px">117</div>
<div class="cl code" style="top:663.3px">          <span class="m">QString::toUtf8</span>(&amp;<span class="v">pInfo-</span>&gt;<span class="w">pStrUserName</span>, <span class="v">aStrUserName</span>);<span class="c">// Wchar =&gt; char</span></div>
<div class="dot" style="top:687.9px"></div>
<div class="ln code" style="top:686.3px">118</div>
<div class="cl code" style="top:686.3px">          <span class="f">LOBYTE</span>(<span class="v">v4</span>) = <span class="v">cPassword_3</span> != <span class="n">'\xFC'</span>;</div>
<div class="dot" style="top:710.9px"></div>
<div class="ln code" style="top:709.3px">119</div>
<div class="cl code" style="top:709.3px">          <span class="v">szUserName</span> = <span class="m">QByteArray::data</span>(<span class="v">aStrUserName</span>);</div>
<div class="dot" style="top:733.9px"></div>
<div class="ln code" style="top:732.3px">120</div>
<div class="cl code" style="top:732.3px">          <span class="v">v25</span> = <span class="f">sub_140004A16</span>(<span class="v">szUserName</span>, <span class="v">v4</span>, <span class="v">v22</span>, <span class="f">LODWORD</span>(<span class="v">pInfo-</span>&gt;<span class="w">field_30</span>));<span class="c">// </span><span class="c cj">关键的检验</span></div>
<div class="dot" style="top:756.9px"></div>
<div class="ln code" style="top:755.3px">121</div>
<div class="cl code" style="top:755.3px">          if ( <span class="v">aryPassword_4</span> == <span class="v">v25</span></div>
<div class="ln code" style="top:778.3px">122</div>
<div class="cl code" style="top:778.3px">            &amp;&amp; <span class="v">cPassword_5</span> == <span class="f">BYTE1</span>(<span class="v">v25</span>)</div>
<div class="ln code" style="top:801.3px">123</div>
<div class="cl code" style="top:801.3px">            &amp;&amp; <span class="v">aryPassword_6</span> == <span class="f">BYTE2</span>(<span class="v">v25</span>)</div>
<div class="ln code" style="top:824.3px">124</div>
<div class="cl code" style="top:824.3px">            &amp;&amp; <span class="v">aryPassword_7</span> == <span class="f">HIBYTE</span>(<span class="v">v25</span>) )</div>
<div class="ln code" style="top:847.3px">125</div>
<div class="cl code" style="top:847.3px">          {</div>
<div class="dot" style="top:871.9px"></div>
<div class="ln code" style="top:870.3px">126</div>
<div class="cl code" style="top:870.3px">            if ( <span class="v">cPassword_3</span> == <span class="n">0x9C</span> )</div>
<div class="ln code" style="top:893.3px">127</div>
<div class="cl code" style="top:893.3px">            {</div>
<div class="dot" style="top:917.9px"></div>
<div class="ln code" style="top:916.3px">128</div>
<div class="cl code" style="top:916.3px">              if ( <span class="v">Const_E</span> &gt; <span class="f">HIDWORD</span>(<span class="v">pInfo-</span>&gt;<span class="w">field_28</span>) )<span class="c">// xxxx-xxxx-xxxx-xxxx </span><span class="c cj">的密码</span></div>
<div class="abs" style="left:481px;top:217px;width:351px;height:152px;border:2px solid #ec1c24"></div>
<div class="abs" style="left:1903px;top:542px;width:14px;height:146px;border-radius:7px;background:#5c5c5c"></div>
<div class="sbx" style="left:455px;top:939px;width:76px;height:19px"></div>
<div class="sbx" style="left:533px;top:939px;width:256.5px;height:19px"></div>
<div class="sbx" style="left:791px;top:939px;width:12.5px;height:19px"></div>
<div class="abs cn" style="left:458px;top:940px">0036D96C</div>
<div class="abs cn" style="left:535.5px;top:940px">sub_14036E4C0:97 (14036E56C)</div>
<div class="abs" style="left:458px;top:962px;width:1395px;height:14px;border-radius:7px;background:#5c5c5c"></div>
<div class="abs" style="left:0px;top:932px;width:64px;height:22px;border:1.5px solid #147c84;border-radius:2px;background:#363636"></div>
<svg class="abs" style="left:27px;top:938px" width="11" height="11" viewBox="0 0 11 11"><path d="M1.6 1.6 L9.4 9.4 M9.4 1.6 L1.6 9.4" stroke="#0818c0" stroke-width="3.2"/><path d="M1.8 1.8 L9.2 9.2 M9.2 1.8 L1.8 9.2" stroke="#3878ff" stroke-width="1.6"/></svg>
<div class="abs" style="left:69px;top:932px;width:313.5px;height:22px;border:1px solid #4c4c4c;border-radius:2px;background:#363636"></div>
<div class="abs ss" style="left:79px;top:937px">00014036E4C0</div>
<div class="abs ui" style="left:6px;top:958.5px;letter-spacing:0.27px">Line 1 of 1</div>
<div class="sbx" style="left:0.5px;top:981.5px;width:102px;height:18px;border-color:#585858"></div>
<div class="abs cn" style="left:2.0px;top:982.8px">AU:  idle</div>
<div class="sbx" style="left:105.5px;top:981.5px;width:73px;height:18px;border-color:#585858"></div>
<div class="abs cn" style="left:107.0px;top:982.8px">Down</div>
<div class="sbx" style="left:181.5px;top:981.5px;width:93px;height:18px;border-color:#585858"></div>
<div class="abs cn" style="left:183.0px;top:982.8px">Disk: 87GB</div>
</body></html>
